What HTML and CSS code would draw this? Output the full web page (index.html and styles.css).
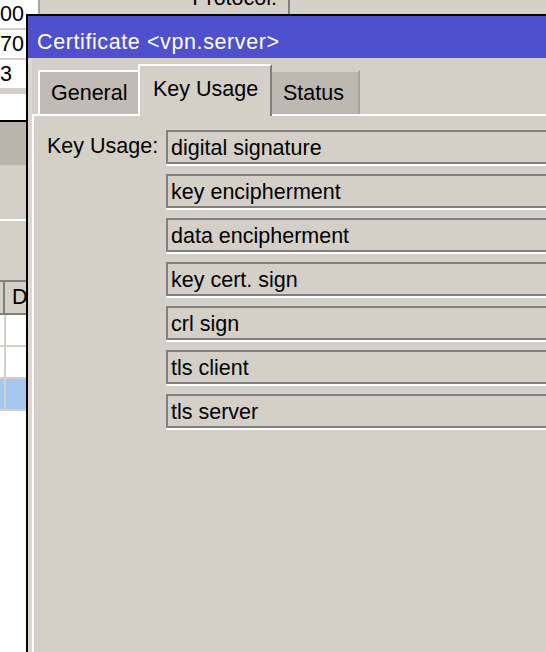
FILE: index.html
```html
<!DOCTYPE html>
<html lang="en">
	<head>
		<meta charset="utf-8">
		<title>Certificate &lt;vpn.server&gt;</title>
		<link rel="stylesheet" href="styles.css">
	</head>
	<body>
		<div id="desktop">
			<div id="back-list">
				<div class="cell num">00</div>
				<div class="cell num">70</div>
				<div class="cell">3</div>
				<div class="gap"></div>
				<div class="cell blank"></div>
				<div class="shade"></div>
				<div class="plain"></div>
				<div class="plain low"></div>
				<div class="head"><span class="sep"></span><span class="head-text">Da</span></div>
				<div class="row"><span class="sep"></span></div>
				<div class="row"><span class="sep"></span></div>
				<div class="row picked"><span class="sep"></span></div>
				<div class="rest"></div>
			</div>
			<div id="back-top">
				<div class="white-edge"></div>
				<div class="proto">Protocol:</div>
				<div class="proto-box"></div>
			</div>
			<div id="window">
				<div id="title">Certificate &lt;vpn.server&gt;</div>
				<div id="sheet">
					<div id="tabs">
						<div class="tab">General</div>
						<div class="tab active">Key Usage</div>
						<div class="tab last">Status</div>
					</div>
					<div id="panel">
						<div class="label">Key Usage:</div>
						<div class="fields">
							<div class="field">digital signature</div>
							<div class="field">key encipherment</div>
							<div class="field">data encipherment</div>
							<div class="field">key cert. sign</div>
							<div class="field">crl sign</div>
							<div class="field">tls client</div>
							<div class="field">tls server</div>
						</div>
					</div>
				</div>
			</div>
		</div>
	</body>
</html>
```

FILE: styles.css
```css
* {
	box-sizing:border-box}
body {
	background-color:#d4d0c8;
	color:#000000;
	font-family:"Liberation Sans", Arial, sans-serif;
	font-size:21.5px;
	margin:0;
	overflow:hidden}
#desktop {
	display:grid;
	grid-template-columns:26px 520px;
	grid-template-rows:14px 638px;
	height:652px;
	overflow:hidden;
	width:546px}

/* background window, left strip */
#back-list {
	display:flex;
	flex-direction:column;
	grid-column:1;
	grid-row:1 / 3;
	overflow:hidden}
.cell {
	background-color:#ffffff;
	border-bottom:2px solid #d4d0c8;
	flex:none;
	height:30px;
	line-height:28px;
	white-space:nowrap}
.num {
	padding-right:4px;
	text-align:right}
.gap {
	flex:none;
	height:4px}
.blank {
	border-bottom:2px solid #000000;
	height:28px}
.shade {
	background-color:#b9b5ad;
	flex:none;
	height:43px}
.plain {
	border-bottom:2px solid #ffffff;
	flex:none;
	height:56px}
.low {
	border-bottom-color:#808080;
	height:61px}
.head {
	border-bottom:2px solid #808080;
	display:flex;
	flex:none;
	height:33px;
	line-height:31px;
	white-space:nowrap}
.head-text {
	padding-left:5px}
.sep {
	background-color:#d4d0c8;
	border-left:2px solid #808080;
	flex:none;
	margin-left:3px;
	width:4px}
.row {
	background-color:#ffffff;
	border-bottom:2px solid #d4d0c8;
	display:flex;
	flex:none;
	height:32px}
.row .sep {
	border-left:none;
	margin-left:4px;
	width:2px}
.picked {
	background-color:#a6c8f0}
.rest {
	background-color:#ffffff;
	flex:1}

/* background window, top strip */
#back-top {
	display:flex;
	grid-column:2;
	grid-row:1;
	overflow:hidden}
.white-edge {
	background-color:#ffffff;
	border-right:2px solid #a8a49e;
	flex:none;
	width:14px}
.proto {
	flex:none;
	line-height:24px;
	margin-top:-14px;
	text-align:right;
	width:237px}
.proto-box {
	border-left:2px solid #808080;
	flex:none;
	margin-left:11px;
	width:40px}

/* certificate window */
#window {
	border-left:2px solid #000000;
	border-top:2px solid #000000;
	display:flex;
	flex-direction:column;
	grid-column:2;
	grid-row:2;
	overflow:hidden}
#title {
	background-color:#4f50cd;
	color:#ffffff;
	flex:none;
	height:42px;
	letter-spacing:0.6px;
	line-height:32px;
	padding-left:9px;
	padding-top:10px;
	white-space:nowrap}
#sheet {
	background-color:#d4d0c8;
	border-left:4px solid #dcd8d1;
	display:flex;
	flex:1;
	flex-direction:column}
#tabs {
	align-items:flex-end;
	display:flex;
	flex:none;
	height:56px;
	padding-left:6px}
.tab {
	background-color:#c0bcb5;
	border-left:2px solid #ffffff;
	border-top:2px solid #ffffff;
	flex:none;
	height:44px;
	line-height:42px;
	padding-left:11px;
	white-space:nowrap;
	width:100px}
.active {
	background-color:#d4d0c8;
	border-right:2px solid #808080;
	height:52px;
	line-height:46px;
	margin-bottom:-2px;
	padding-left:13px;
	position:relative;
	width:134px;
	z-index:1}
.last {
	background-color:#bdb9b2;
	border-left:none;
	border-right:2px solid #a8a49d;
	border-top-color:#d4d0c8;
	width:88px}
#panel {
	border-left:2px solid #ffffff;
	border-top:2px solid #ffffff;
	display:flex;
	flex:1;
	padding:14px 0 0 13px}
.label {
	flex:none;
	line-height:28px;
	padding-top:2px;
	white-space:nowrap;
	width:119px}
.fields {
	display:flex;
	flex:1;
	flex-direction:column;
	margin-right:-20px}
.field {
	border:2px solid #808080;
	box-shadow:0 2px 0 #ffffff;
	height:34px;
	line-height:28px;
	margin-bottom:10px;
	padding:2px 0 0 3px;
	white-space:nowrap}
```
